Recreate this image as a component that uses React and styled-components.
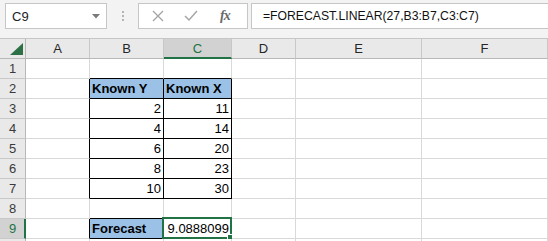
import React from "react";
import styled, { createGlobalStyle } from "styled-components";

const GREEN = "#217346";

const GlobalStyle = createGlobalStyle`
  html, body {
    margin: 0;
    padding: 0;
    background: #ffffff;
    overflow: hidden;
  }
  body {
    font-family: "Liberation Sans", Arial, sans-serif;
  }
`;

const Window = styled.div`
  width: 548px;
  height: 241px;
  overflow: hidden;
`;

const Toolbar = styled.div`
  height: 38px;
  box-sizing: border-box;
  padding: 3px 0 0 5px;
  background: #f3f3f3;
  display: flex;
  align-items: flex-start;
`;

const Box = styled.div`
  height: 26px;
  box-sizing: border-box;
  border: 1px solid #c6c6c6;
  background: #ffffff;
  display: flex;
  align-items: center;
`;

const NameBox = styled(Box)`
  width: 102px;
  padding: 0 6px;
  justify-content: space-between;
  font-size: 13px;
  color: #222;
`;

const Dots = styled.div`
  width: 31px;
  height: 26px;
  display: flex;
  flex-direction: column;
  align-items: center;
  justify-content: center;
  gap: 2px;
  span {
    width: 2px;
    height: 2px;
    background: #b5b5b5;
  }
`;

const ButtonBox = styled(Box)`
  width: 110px;
  padding: 0 0 0 13px;
  gap: 20px;
  margin-right: 3px;
`;

const FormulaBox = styled(Box)`
  flex: 1;
  border-right: none;
  padding-left: 11px;
  font-size: 12.2px;
  color: #111;
  white-space: nowrap;
`;

const Fx = styled.span`
  font-family: "Liberation Serif", "Times New Roman", serif;
  font-style: italic;
  font-weight: 700;
  font-size: 14px;
  color: #6a6a6a;
  letter-spacing: -1px;
  margin-left: 2px;
`;

const Sheet = styled.div`
  display: grid;
  grid-template-columns: 26px 64px 74px 68px 64px 126px 126px;
  grid-auto-rows: 20px;
  border-top: 1px solid #c6c6c6;
`;

const Corner = styled.div`
  box-sizing: border-box;
  background: #e9e9e9;
  border-right: 1px solid #b8b8b8;
  border-bottom: 1px solid #b8b8b8;
  display: flex;
  align-items: flex-end;
  justify-content: flex-end;
  padding: 0 2px 3px 0;
`;

const ColHead = styled.div`
  box-sizing: border-box;
  background: ${(p) => (p.$active ? "#d2d2d2" : "#e9e9e9")};
  border-right: 1px solid #c8c8c8;
  border-bottom: ${(p) => (p.$active ? `2px solid ${GREEN}` : "1px solid #b8b8b8")};
  color: ${(p) => (p.$active ? GREEN : "#262626")};
  font-size: 13px;
  display: flex;
  align-items: center;
  justify-content: center;
  padding-top: ${(p) => (p.$active ? "1px" : "0")};
`;

const RowHead = styled.div`
  box-sizing: border-box;
  background: ${(p) => (p.$active ? "#d2d2d2" : "#e9e9e9")};
  border-right: ${(p) => (p.$active ? `2px solid ${GREEN}` : "1px solid #b8b8b8")};
  border-bottom: 1px solid #c8c8c8;
  color: ${(p) => (p.$active ? GREEN : "#3a3a3a")};
  font-size: 13px;
  display: flex;
  align-items: center;
  justify-content: center;
  padding-left: ${(p) => (p.$active ? "1px" : "0")};
`;

const Cell = styled.div`
  position: relative;
  box-sizing: border-box;
  border-right: 1px solid ${(p) => (p.$br ? "#000" : "#d9d9d9")};
  border-bottom: 1px solid ${(p) => (p.$bb ? "#000" : "#d9d9d9")};
  background: ${(p) => (p.$fill ? "#9bc2e6" : "#fff")};
  font-size: 13px;
  font-weight: ${(p) => (p.$bold ? 700 : 400)};
  color: #000;
  display: flex;
  align-items: flex-end;
  justify-content: ${(p) => (p.$right ? "flex-end" : "flex-start")};
  padding: 0 2px 2px 2px;
  white-space: nowrap;
`;

const Selection = styled.div`
  position: absolute;
  top: -2px;
  left: -2px;
  right: -1px;
  bottom: -1px;
  border: 2px solid ${GREEN};
  pointer-events: none;
`;

const Handle = styled.div`
  position: absolute;
  right: -4px;
  bottom: -4px;
  width: 5px;
  height: 5px;
  background: ${GREEN};
  border: 1px solid #fff;
`;

const cols = ["A", "B", "C", "D", "E", "F"];

const cells = {
  B2: { v: "Known Y", bold: true, fill: true },
  C2: { v: "Known X", bold: true, fill: true },
  B3: { v: "2", right: true },
  C3: { v: "11", right: true },
  B4: { v: "4", right: true },
  C4: { v: "14", right: true },
  B5: { v: "6", right: true },
  C5: { v: "20", right: true },
  B6: { v: "8", right: true },
  C6: { v: "23", right: true },
  B7: { v: "10", right: true },
  C7: { v: "30", right: true },
  B9: { v: "Forecast", bold: true, fill: true },
  C9: { v: "9.0888099", right: true, selected: true },
};

const inTable = (c, r) => (c === "B" || c === "C") && r >= 2 && r <= 7;

const blackRight = (c, r) =>
  (c === "A" && ((r >= 2 && r <= 7) || r === 9)) || inTable(c, r) || (c === "B" && r === 9);

const blackBottom = (c, r) =>
  ((c === "B" || c === "C") && r === 1) || inTable(c, r) || (c === "B" && (r === 8 || r === 9));

const XIcon = () => (
  <svg width="12" height="12" viewBox="0 0 12 12">
    <path d="M1 1 L11 11 M11 1 L1 11" stroke="#a6a6a6" strokeWidth="1.4" fill="none" />
  </svg>
);

const CheckIcon = () => (
  <svg width="14" height="12" viewBox="0 0 14 12">
    <path d="M1 6 L5 10 L13 1" stroke="#a6a6a6" strokeWidth="1.5" fill="none" />
  </svg>
);

const Caret = () => (
  <svg width="8" height="5" viewBox="0 0 8 5">
    <polygon points="0,0 8,0 4,4.5" fill="#7a7a7a" />
  </svg>
);

const CornerMark = () => (
  <svg width="13" height="12" viewBox="0 0 13 12">
    <polygon points="13,0 13,12 0,12" fill="#2d7046" />
  </svg>
);

const App = () => {
  const rows = Array.from({ length: 10 }, (_, i) => i + 1);
  return (
    <Window>
      <GlobalStyle />
      <Toolbar>
        <NameBox>
          <span>C9</span>
          <Caret />
        </NameBox>
        <Dots>
          <span />
          <span />
          <span />
        </Dots>
        <ButtonBox>
          <XIcon />
          <CheckIcon />
          <Fx>fx</Fx>
        </ButtonBox>
        <FormulaBox>=FORECAST.LINEAR(27,B3:B7,C3:C7)</FormulaBox>
      </Toolbar>
      <Sheet>
        <Corner>
          <CornerMark />
        </Corner>
        {cols.map((c) => (
          <ColHead key={c} $active={c === "C"}>
            {c}
          </ColHead>
        ))}
        {rows.map((r) => (
          <React.Fragment key={r}>
            {/* row 10 only peeks in by a couple of pixels, its number is out of view */}
            <RowHead $active={r === 9}>{r < 10 ? r : null}</RowHead>
            {cols.map((c) => {
              const d = cells[c + r] || {};
              return (
                <Cell
                  key={c + r}
                  $br={blackRight(c, r)}
                  $bb={blackBottom(c, r)}
                  $fill={d.fill}
                  $bold={d.bold}
                  $right={d.right}
                >
                  {d.v}
                  {d.selected && (
                    <Selection>
                      <Handle />
                    </Selection>
                  )}
                </Cell>
              );
            })}
          </React.Fragment>
        ))}
      </Sheet>
    </Window>
  );
};

export default App;
